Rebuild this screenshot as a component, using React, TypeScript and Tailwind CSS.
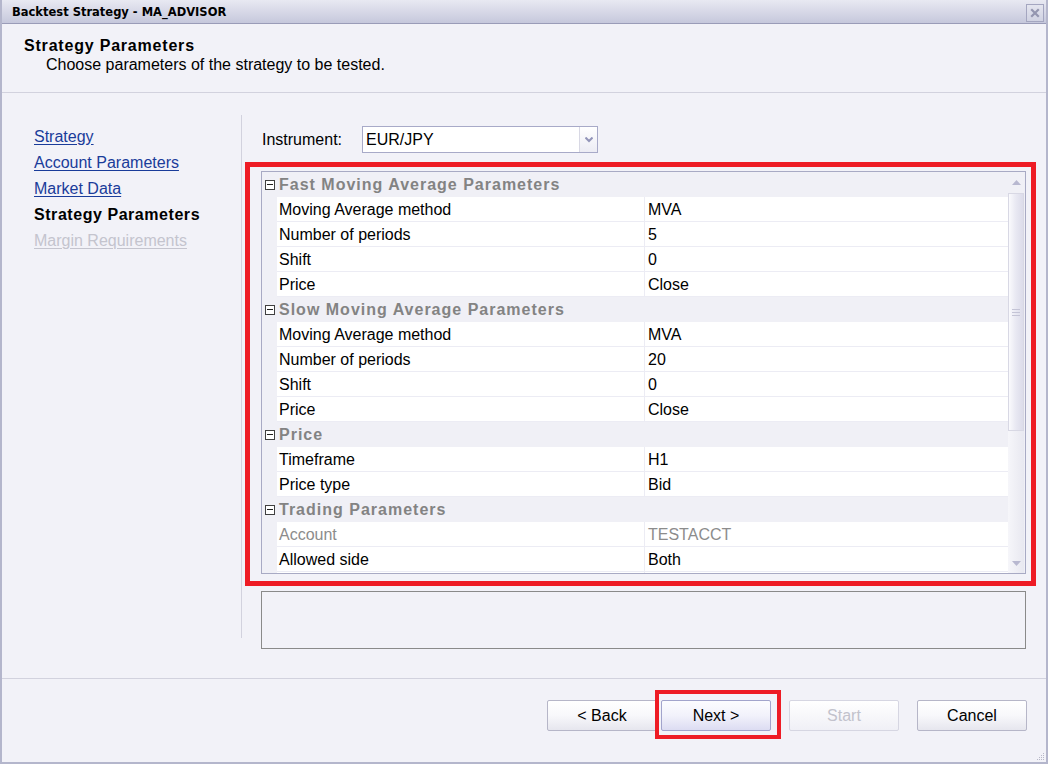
import React from "react";

type Row =
  | { kind: "cat"; label: string }
  | { kind: "prop"; name: string; value: string; disabled?: boolean };

const rows: Row[] = [
  { kind: "cat", label: "Fast Moving Average Parameters" },
  { kind: "prop", name: "Moving Average method", value: "MVA" },
  { kind: "prop", name: "Number of periods", value: "5" },
  { kind: "prop", name: "Shift", value: "0" },
  { kind: "prop", name: "Price", value: "Close" },
  { kind: "cat", label: "Slow Moving Average Parameters" },
  { kind: "prop", name: "Moving Average method", value: "MVA" },
  { kind: "prop", name: "Number of periods", value: "20" },
  { kind: "prop", name: "Shift", value: "0" },
  { kind: "prop", name: "Price", value: "Close" },
  { kind: "cat", label: "Price" },
  { kind: "prop", name: "Timeframe", value: "H1" },
  { kind: "prop", name: "Price type", value: "Bid" },
  { kind: "cat", label: "Trading Parameters" },
  { kind: "prop", name: "Account", value: "TESTACCT", disabled: true },
  { kind: "prop", name: "Allowed side", value: "Both" },
  { kind: "prop", name: "", value: "" },
];

function MinusBox() {
  return (
    <div className="w-[10px] h-[10px] border border-[#404040] bg-white flex items-center justify-center">
      <div className="w-[6px] h-px bg-[#202020]" />
    </div>
  );
}

function Button({
  label,
  disabled,
  focused,
}: {
  label: string;
  disabled?: boolean;
  focused?: boolean;
}) {
  return (
    <div
      className={
        "w-[110px] h-[31px] flex items-center justify-center pt-[1px] rounded-[2px] border text-[16px] " +
        (disabled
          ? "border-[#d6d6e2] bg-gradient-to-b from-[#ffffff] to-[#f0f0f6] text-[#c2c2cc]"
          : focused
          ? "border-[#a2a4cc] bg-gradient-to-b from-[#fcfcff] via-[#f2f2fb] to-[#dcdcf2] text-black"
          : "border-[#b6b6c8] bg-gradient-to-b from-[#ffffff] via-[#f8f8fb] to-[#e6e6ee] text-black")
      }
    >
      {label}
    </div>
  );
}

export default function App() {
  return (
    <div
      className="w-[1048px] h-[764px] bg-[#f2f2f8] flex flex-col border-l-2 border-r-2 border-b-2 border-[#b4b6cc] overflow-hidden"
      style={{ fontFamily: '"Liberation Sans", Arial, sans-serif' }}
    >
      {/* Title bar */}
      <div className="h-[24px] shrink-0 flex items-center justify-between pl-[10px] pr-[2px] bg-gradient-to-b from-[#e8e9f2] to-[#c6c8dc] border-b border-[#9a9cb8]">
        <span
          className="text-[11.5px] font-bold text-black pt-[3px]"
          style={{ fontFamily: '"DejaVu Sans", Verdana, sans-serif' }}
        >
          Backtest Strategy - MA_ADVISOR
        </span>
        <div className="w-[18px] h-[18px] mt-[2px] border border-[#a4a6c0] bg-gradient-to-b from-[#e4e5ef] to-[#d0d2e2] flex items-center justify-center">
          <svg width="10" height="10" viewBox="0 0 10 10">
            <path d="M2 2 L8 8 M8 2 L2 8" stroke="#9496b0" strokeWidth="2.2" strokeLinecap="square" />
          </svg>
        </div>
      </div>

      {/* Header */}
      <div className="h-[69px] shrink-0 pt-[13px] pl-[22px] border-b border-[#d2d2de]">
        <div className="text-[16px] leading-[18px] font-bold text-black tracking-[0.8px]">Strategy Parameters</div>
        <div className="text-[16px] leading-[18px] text-black pl-[22px] mt-[1px]">
          Choose parameters of the strategy to be tested.
        </div>
      </div>

      {/* Body */}
      <div className="flex-1 flex min-h-0 border-b border-[#d2d2de]">
        <div className="w-[239px] shrink-0 pt-[31px] pl-[32px] flex flex-col text-[16px] leading-[26px]">
          <span className="text-[#1a3c9a] underline underline-offset-[2px]">Strategy</span>
          <span className="text-[#1a3c9a] underline underline-offset-[2px]">Account Parameters</span>
          <span className="text-[#1a3c9a] underline underline-offset-[2px]">Market Data</span>
          <span className="text-black font-bold tracking-[0.55px]">Strategy Parameters</span>
          <span className="text-[#c4c4ce] underline underline-offset-[2px]">Margin Requirements</span>
        </div>
        <div className="w-px bg-[#d2d2de] mt-[22px] mb-[40px]" />
        <div className="flex-1 flex flex-col pt-[33px] pl-[19px] pr-[20px]">
          {/* Instrument */}
          <div className="flex items-center h-[27px]">
            <span className="w-[101px] pl-[1px] pt-[1px] text-[16px] text-black">Instrument:</span>
            <div className="w-[236px] h-[27px] border border-[#a8aac8] bg-white flex">
              <div className="flex-1 flex items-center pl-[3px] pt-[1px] text-[16px] text-black">EUR/JPY</div>
              <div className="w-[18px] border-l border-[#d8d8e4] bg-gradient-to-b from-[#ffffff] to-[#ececf4] flex items-center justify-center">
                <svg width="8" height="6" viewBox="0 0 8 6">
                  <path d="M0.5 0.5 L4 4 L7.5 0.5" stroke="#9294b8" strokeWidth="2" fill="none" />
                </svg>
              </div>
            </div>
          </div>

          {/* Property grid with annotation */}
          <div className="relative mt-[18px]">
            <div className="absolute left-[-16px] top-[-9px] right-[-10px] bottom-[-12px] border-[5px] border-[#ee1c25] pointer-events-none" />
            <div className="h-[403px] border border-[#a8aac4] bg-[#f0f0f6] flex overflow-hidden">
              <div className="flex-1 flex flex-col overflow-hidden">
                {rows.map((r, i) =>
                  r.kind === "cat" ? (
                    <div key={i} className="h-[25px] shrink-0 flex items-center bg-[#f0f0f6]">
                      <div className="w-[15px] flex justify-center pl-[1px]">
                        <MinusBox />
                      </div>
                      <span className="pl-[2px] text-[16px] font-bold text-[#838383] tracking-[1px]">{r.label}</span>
                    </div>
                  ) : (
                    <div key={i} className="h-[25px] shrink-0 flex">
                      <div className="w-[15px] bg-[#f0f0f6]" />
                      <div className="flex-1 flex bg-white border-b border-[#ececf4]">
                        <div
                          className={
                            "w-[368px] flex items-center pl-[2px] pt-[1px] text-[16px] border-r border-[#ececf4] " +
                            (r.disabled ? "text-[#8c8c8c]" : "text-black")
                          }
                        >
                          {r.name}
                        </div>
                        <div
                          className={
                            "flex-1 flex items-center pl-[3px] pt-[1px] text-[16px] " +
                            (r.disabled ? "text-[#8c8c8c]" : "text-black")
                          }
                        >
                          {r.value}
                        </div>
                      </div>
                    </div>
                  )
                )}
              </div>
              {/* Scrollbar */}
              <div className="w-[16px] shrink-0 bg-[#f0f0f6] flex flex-col mr-[1px]">
                <div className="h-[21px] flex items-center justify-center">
                  <svg width="9" height="5" viewBox="0 0 9 5">
                    <path d="M0 5 L4.5 0 L9 5 Z" fill="#b8b8d0" />
                  </svg>
                </div>
                <div className="h-[238px] border border-[#d8d8e4] bg-gradient-to-r from-[#fafafd] via-[#e8e8f2] to-[#dcdcea] flex items-center justify-center">
                  <div className="flex flex-col gap-[2px]">
                    <div className="w-[8px] h-px bg-[#c4c4d6]" />
                    <div className="w-[8px] h-px bg-[#c4c4d6]" />
                    <div className="w-[8px] h-px bg-[#c4c4d6]" />
                  </div>
                </div>
                <div className="flex-1 bg-gradient-to-r from-[#f6f6fa] to-[#e8e8f0]" />
                <div className="h-[20px] flex items-center justify-center bg-gradient-to-r from-[#f6f6fa] to-[#e8e8f0]">
                  <svg width="9" height="5" viewBox="0 0 9 5">
                    <path d="M0 0 L4.5 5 L9 0 Z" fill="#b8b8d0" />
                  </svg>
                </div>
              </div>
            </div>
          </div>

          {/* Description box */}
          <div className="mt-[17px] h-[58px] border border-[#8a8a8a]" />
        </div>
      </div>

      {/* Footer */}
      <div className="h-[83px] shrink-0 relative flex items-start justify-end pt-[21px] pr-[19px]">
        <div className="flex">
          <Button label="< Back" />
          <div className="relative ml-[4px]">
            <div className="absolute left-[-6px] top-[-10px] right-[-10px] bottom-[-8px] border-[4px] border-[#ee1c25] pointer-events-none" />
            <Button label="Next >" focused />
          </div>
          <div className="ml-[18px]">
            <Button label="Start" disabled />
          </div>
          <div className="ml-[18px]">
            <Button label="Cancel" />
          </div>
        </div>
        <svg className="absolute right-[1px] bottom-[1px]" width="8" height="8" viewBox="0 0 8 8">
          <rect x="6" y="0" width="1" height="1" fill="#b8b8c8" />
          <rect x="4" y="2" width="1" height="1" fill="#b8b8c8" />
          <rect x="6" y="2" width="1" height="1" fill="#b8b8c8" />
          <rect x="2" y="4" width="1" height="1" fill="#b8b8c8" />
          <rect x="4" y="4" width="1" height="1" fill="#b8b8c8" />
          <rect x="6" y="4" width="1" height="1" fill="#b8b8c8" />
          <rect x="0" y="6" width="1" height="1" fill="#b8b8c8" />
          <rect x="2" y="6" width="1" height="1" fill="#b8b8c8" />
          <rect x="4" y="6" width="1" height="1" fill="#b8b8c8" />
          <rect x="6" y="6" width="1" height="1" fill="#b8b8c8" />
        </svg>
      </div>
    </div>
  );
}
